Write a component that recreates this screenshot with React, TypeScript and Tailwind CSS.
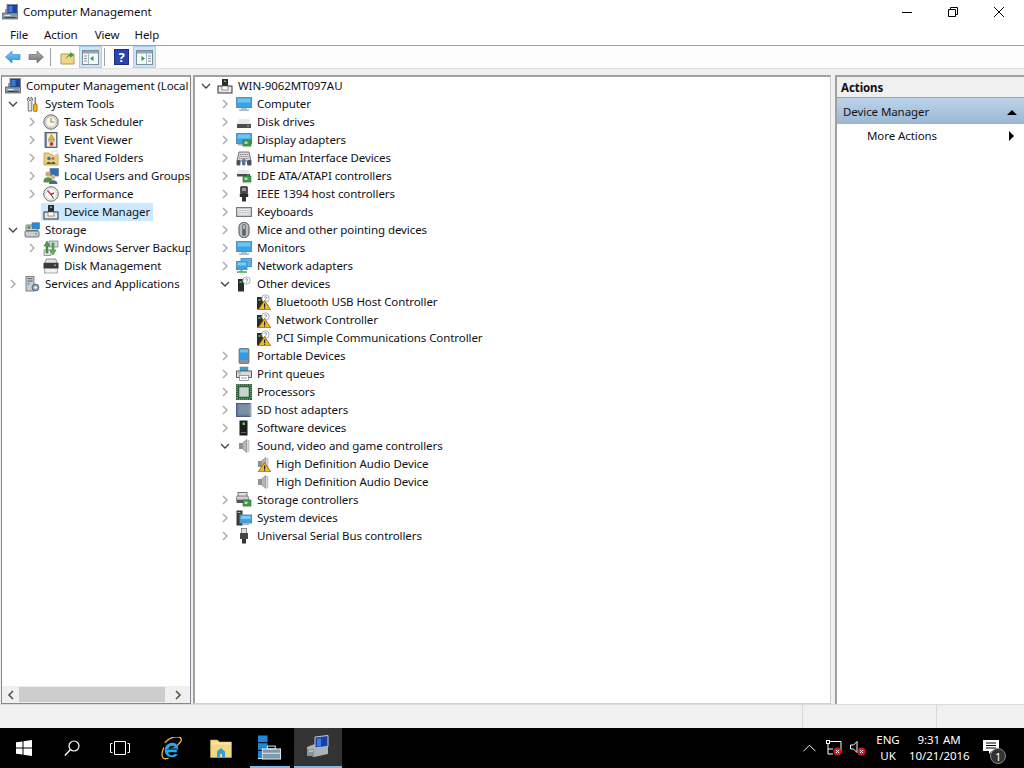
import type { ReactNode } from "react";

const chip = (
  <>
    <rect x="7" y="8" width="8" height="6" fill="#3f9a57" stroke="#1f6b37" strokeWidth="0.6" />
    <rect x="8.5" y="9.5" width="3" height="2.5" fill="#b7d9a8" />
    <path d="M8 14.5v1M10 14.5v1M12 14.5v1M14 14.5v1" stroke="#c9a227" strokeWidth="0.8" />
  </>
);

const warn = (
  <>
    <path d="M9.5 6.5 15.8 15.8H3.2Z" fill="#f5b81c" stroke="#8a6200" strokeWidth="0.8" />
    <rect x="9" y="9.5" width="1.2" height="3.5" fill="#222" />
    <rect x="9" y="13.6" width="1.2" height="1.2" fill="#222" />
  </>
);

const soundShape = (
  <>
    <rect x="3" y="5" width="3.5" height="6" fill="#8f8f8f" />
    <path d="M6.5 5 11 1.5v13L6.5 11Z" fill="#b4b4b4" stroke="#7a7a7a" strokeWidth="0.6" />
    <rect x="12" y="2" width="1.3" height="12" fill="#c4c4c4" />
  </>
);

const otherShape = (
  <>
    <rect x="2" y="3" width="6" height="12.5" fill="#2c2c2c" />
    <rect x="3.5" y="5" width="2" height="2" fill="#4caf50" />
    <circle cx="10.5" cy="4.5" r="3.7" fill="#fff" stroke="#9a9a9a" strokeWidth="0.8" />
    <path d="M9.3 3.6c.3-1.2 2.4-1.2 2.4.2 0 .9-1.2.9-1.2 1.8M10.5 6.2v.6" fill="none" stroke="#4a78b5" strokeWidth="0.8" />
  </>
);

const devMgrShape = (
  <>
    <rect x="5" y="1" width="6" height="7" fill="#2f2f2f" />
    <rect x="7" y="2.5" width="2" height="1.5" fill="#6fbf73" />
    <rect x="1" y="8" width="14" height="7" fill="#e8e8e8" stroke="#333" />
    <rect x="5" y="8" width="6" height="4" fill="#fff" stroke="#555" strokeWidth="0.6" />
  </>
);

const monitorShape = (
  <>
    <rect x="0.5" y="1.5" width="15" height="10" fill="#3aa3e3" stroke="#5d8fb0" />
    <rect x="1.5" y="2.5" width="13" height="4" fill="#6cc4f2" />
    <rect x="5" y="12" width="6" height="1.5" fill="#a9c3d3" />
    <rect x="3" y="13.5" width="10" height="1.2" fill="#8aa3b3" />
  </>
);

const icons: Record<string, ReactNode> = {
  computerMgmt: (
    <>
      <rect x="3" y="5" width="10" height="7" fill="#8f9aa5" />
      <rect x="5" y="0.5" width="10.5" height="9" fill="#1d3fa5" stroke="#7d8b99" />
      <rect x="6.5" y="2" width="4" height="6" fill="#3b7be0" />
      <rect x="0.5" y="9" width="15" height="6" fill="#8d98a3" stroke="#4e5862" strokeWidth="0.7" />
      <rect x="2.5" y="11" width="6" height="1" fill="#e6e6e6" />
      <rect x="2.5" y="13" width="11" height="1" fill="#3c444c" />
      <rect x="11" y="10.5" width="2" height="1.5" fill="#57b957" />
    </>
  ),
  tools: (
    <>
      <path d="M5 1v3l1 1 1-1V1c2 .8 2.2 3.4.8 4.6V15H4.2V5.6C2.8 4.4 3 1.8 5 1Z" fill="#e6e6e6" stroke="#555" strokeWidth="0.8" />
      <rect x="10.5" y="1" width="1.6" height="7" fill="#888" />
      <rect x="9.5" y="8" width="3.6" height="7.5" rx="1" fill="#efb315" stroke="#7d5d00" strokeWidth="0.7" />
    </>
  ),
  clock: (
    <>
      <circle cx="8" cy="8" r="7.2" fill="#d8d8d0" stroke="#6d6d6d" />
      <circle cx="8" cy="8" r="5.3" fill="#f7f7ef" stroke="#b0b0a8" strokeWidth="0.6" />
      <path d="M8 4v4h3.5" fill="none" stroke="#a88a2c" strokeWidth="1.1" />
    </>
  ),
  eventViewer: (
    <>
      <rect x="2" y="0.5" width="12" height="15" fill="#7d8fa8" stroke="#3e4a5c" strokeWidth="0.8" />
      <rect x="4" y="1.5" width="9" height="13" fill="#f2f0d8" />
      <path d="M8.5 2.5 11.5 7.5H5.5Z" fill="#f2b91f" stroke="#8a6a00" strokeWidth="0.5" />
      <path d="M5 9h7" stroke="#8a8a8a" />
      <circle cx="8.5" cy="12" r="2" fill="#d9352c" />
    </>
  ),
  sharedFolder: (
    <>
      <path d="M1 3h5l1 1.5h8V15H1Z" fill="#eccf86" stroke="#b69a50" strokeWidth="0.8" />
      <rect x="9" y="1" width="5" height="4" fill="#fff" stroke="#bbb" strokeWidth="0.5" />
      <circle cx="6" cy="8.5" r="1.8" fill="#3e6fae" />
      <circle cx="10" cy="8.5" r="1.8" fill="#c9823a" />
      <path d="M3.5 14c0-3 4.5-3 4.5 0ZM8 14c0-3 4.5-3 4.5 0Z" fill="#4b6a2f" />
    </>
  ),
  users: (
    <>
      <rect x="7" y="0.5" width="8.5" height="7.5" fill="#2e6db8" stroke="#6d7f92" strokeWidth="0.8" />
      <circle cx="5" cy="6" r="2.6" fill="#d6a679" />
      <path d="M0.5 13c0-5 9-5 9 0v1.5h-9Z" fill="#5a8f3c" />
      <circle cx="10" cy="9" r="2.4" fill="#dbb18a" />
      <path d="M6 16c0-5 8.5-5 8.5 0Z" fill="#3d6ca8" />
    </>
  ),
  performance: (
    <>
      <circle cx="8" cy="8" r="7.3" fill="#efefef" stroke="#6e6e6e" />
      <circle cx="8" cy="8" r="5.2" fill="#fff" stroke="#c5c5c5" strokeWidth="0.6" />
      <path d="M4.5 4.5 8 8.5l3-1.5" fill="none" stroke="#d3281f" strokeWidth="1.4" />
      <path d="M8 8.5 10.5 12.5" stroke="#333" strokeWidth="1" />
    </>
  ),
  devMgr: devMgrShape,
  storage: (
    <>
      <rect x="1" y="9" width="14" height="6" rx="1" fill="#c9cdd0" stroke="#505558" strokeWidth="0.8" />
      <rect x="11" y="11" width="2" height="1.5" fill="#5abf5a" />
      <rect x="2" y="3" width="12" height="5.5" rx="1" fill="#d6dadd" stroke="#505558" strokeWidth="0.8" />
      <circle cx="5" cy="5.5" r="1.8" fill="#5c9a5c" />
      <rect x="8" y="0.8" width="7.5" height="6" fill="#1f8fd6" stroke="#56708a" strokeWidth="0.6" />
    </>
  ),
  backup: (
    <>
      <rect x="6" y="1" width="9" height="6" fill="#cfd6dc" stroke="#596470" strokeWidth="0.6" />
      <rect x="1" y="10" width="7" height="5.5" fill="#dfe3e6" stroke="#596470" strokeWidth="0.6" />
      <path d="M4 1 1 6h2v7h2V6h2Z" fill="#47a047" stroke="#2b6b2b" strokeWidth="0.5" />
      <path d="M10 15l3-5h-2V3H9v7H7Z" fill="#62b84f" stroke="#2b6b2b" strokeWidth="0.5" />
    </>
  ),
  disk: (
    <>
      <path d="M3.5 1h9l2 4h-13Z" fill="#e3e3e3" stroke="#666" strokeWidth="0.7" />
      <rect x="0.5" y="5" width="15" height="5.5" fill="#3a3a3a" />
      <rect x="11" y="6.5" width="2" height="1.5" fill="#66cc66" />
      <rect x="1.5" y="10.5" width="13" height="4.5" fill="#f2f2f2" stroke="#777" strokeWidth="0.6" />
    </>
  ),
  services: (
    <>
      <rect x="2" y="0.5" width="8" height="14.5" fill="#c5ccd3" stroke="#5f6b76" strokeWidth="0.8" />
      <rect x="3.5" y="2" width="5" height="1.2" fill="#5f6b76" />
      <rect x="3.5" y="4.5" width="5" height="1.2" fill="#5f6b76" />
      <rect x="3.5" y="7" width="2" height="1.5" fill="#4b9fd5" />
      <circle cx="11.5" cy="11.5" r="3.4" fill="#8da3b8" stroke="#465868" strokeWidth="0.8" />
      <circle cx="11.5" cy="11.5" r="1.2" fill="#fff" />
    </>
  ),
  computer: monitorShape,
  diskDrive: (
    <>
      <path d="M3 5h10l2 5H1Z" fill="#e9e9e9" />
      <rect x="1" y="10" width="14" height="4" rx="0.5" fill="#4d4d4d" />
      <rect x="11" y="11.5" width="2" height="1" fill="#5fd35f" />
    </>
  ),
  displayAdapter: (
    <>
      <rect x="0.5" y="1.5" width="15" height="10" fill="#3aa3e3" stroke="#5d8fb0" />
      <rect x="1.5" y="2.5" width="13" height="4" fill="#6cc4f2" />
      <rect x="2" y="12" width="5" height="1.5" fill="#9fb4c2" />
      {chip}
    </>
  ),
  hid: (
    <>
      <path d="M3 2h10l2 9H1Z" fill="#d9d9d9" stroke="#555" strokeWidth="0.8" />
      <path d="M4 4.5h8M3.5 6.5h9M3 8.5h10" stroke="#7c7c7c" strokeDasharray="1 0.7" />
      <rect x="0.5" y="10" width="4" height="5.5" rx="1.5" fill="#4d5157" />
      <rect x="6" y="9" width="3.5" height="6.5" rx="1.5" fill="#5377a5" />
      <rect x="11" y="10" width="4.5" height="5.5" rx="1.5" fill="#4d5157" />
    </>
  ),
  ide: (
    <>
      <path d="M3 2h9l2 4H1Z" fill="#e9e9e9" />
      <rect x="1" y="6" width="13" height="2.5" fill="#4d4d4d" />
      <rect x="11" y="6.7" width="2" height="1" fill="#5fd35f" />
      {chip}
    </>
  ),
  ieee: (
    <>
      <rect x="4.5" y="0.5" width="7" height="7.5" rx="1" fill="#4a4a4a" stroke="#222" strokeWidth="0.6" />
      <rect x="6" y="2" width="4" height="3" fill="#9a9a9a" />
      <rect x="3.8" y="8" width="8.4" height="3" fill="#2d2d2d" />
      <rect x="6" y="11" width="4" height="4.5" fill="#333" />
    </>
  ),
  keyboard: (
    <>
      <rect x="0.5" y="3.5" width="15" height="9" fill="#c7cbd0" stroke="#757a80" />
      <path d="M2 5.5h12M2 7.5h12" stroke="#fff" strokeDasharray="1 0.6" />
      <path d="M3 10h10" stroke="#f7f7f7" strokeWidth="1.2" />
    </>
  ),
  mouse: (
    <>
      <rect x="3" y="0.5" width="10" height="15" rx="4.5" fill="#b9bec4" stroke="#4d5258" />
      <rect x="6.2" y="2" width="3.6" height="12" rx="1.8" fill="#5d646c" />
      <rect x="7.3" y="3" width="1.4" height="4" fill="#d5d9dd" />
    </>
  ),
  monitor: monitorShape,
  network: (
    <>
      <rect x="5" y="0.5" width="10.5" height="8" fill="#57b1e8" stroke="#5d8fb0" />
      <rect x="0.5" y="3.5" width="10.5" height="8" fill="#3aa3e3" stroke="#5d8fb0" />
      <rect x="1.5" y="4.5" width="8.5" height="3" fill="#79cdf5" />
      <path d="M5.5 11.5v2M1 14h10" stroke="#4aa84a" strokeWidth="1.6" />
    </>
  ),
  other: otherShape,
  warnDevice: (
    <>
      {otherShape}
      {warn}
    </>
  ),
  portable: (
    <>
      <rect x="3" y="0.5" width="10" height="15" rx="1" fill="#8a9096" stroke="#5c6268" strokeWidth="0.7" />
      <rect x="4" y="1.5" width="8" height="10.5" fill="#2f9de6" />
      <rect x="4" y="1.5" width="8" height="3" fill="#66c0f2" />
    </>
  ),
  printer: (
    <>
      <rect x="4" y="1" width="8" height="5" fill="#3f9ad9" stroke="#777" strokeWidth="0.5" />
      <rect x="0.5" y="5" width="15" height="6.5" fill="#d9d9d9" stroke="#4f4f4f" strokeWidth="0.9" />
      <rect x="2" y="6.5" width="3" height="1" fill="#55b655" />
      <rect x="3.5" y="9.5" width="9" height="5" fill="#fff" stroke="#777" strokeWidth="0.7" />
      <path d="M5 12h6" stroke="#999" />
    </>
  ),
  cpu: (
    <>
      <rect x="0.5" y="0.5" width="15" height="15" fill="#1f6b3b" stroke="#3a5a3a" />
      <path d="M1 1h14M1 15h14M1 1v14M15 1v14" stroke="#c9b458" strokeDasharray="1 1" />
      <rect x="3" y="3" width="10" height="10" fill="#c8d4cd" stroke="#4a5a50" strokeWidth="0.6" />
    </>
  ),
  sd: (
    <>
      <rect x="0.5" y="1.5" width="14" height="13" fill="#5b7da8" stroke="#475f80" />
      <rect x="2.5" y="2.5" width="11" height="10" fill="#7f8ea3" />
      <rect x="13.5" y="1.5" width="2" height="13" fill="#98a9bd" />
    </>
  ),
  software: (
    <>
      <rect x="3.5" y="0.5" width="8" height="15" fill="#1e1e1e" />
      <rect x="6.5" y="2.5" width="2.5" height="2.5" fill="#55d16a" />
      <rect x="5" y="12" width="5" height="1" fill="#666" />
    </>
  ),
  sound: soundShape,
  soundWarn: (
    <>
      {soundShape}
      {warn}
    </>
  ),
  storageCtl: (
    <>
      <rect x="2" y="0.5" width="9" height="4" fill="#e0e0e0" stroke="#4a4a4a" strokeWidth="0.7" />
      <path d="M1 4h11l1 4H0Z" fill="#d0d0d0" stroke="#4a4a4a" strokeWidth="0.6" />
      <rect x="0.5" y="8" width="8" height="3" fill="#555" />
      {chip}
    </>
  ),
  system: (
    <>
      <rect x="0.5" y="0.5" width="6" height="15" fill="#3a3a3a" />
      <rect x="1.5" y="2" width="3" height="1" fill="#8cd08c" />
      <rect x="4" y="5" width="11.5" height="8" fill="#3aa3e3" stroke="#5d8fb0" />
      <rect x="5" y="6" width="9.5" height="3" fill="#79cdf5" />
      <rect x="7" y="13.5" width="6" height="1.5" fill="#9fb4c2" />
    </>
  ),
  usb: (
    <>
      <rect x="5.5" y="0.5" width="5" height="5" fill="#e3e3e3" stroke="#666" strokeWidth="0.7" />
      <rect x="4" y="5" width="8" height="6" rx="0.5" fill="#444" />
      <rect x="6" y="11" width="4" height="4.5" fill="#333" />
    </>
  ),
};

function Icon({ name }: { name: string }) {
  return (
    <svg viewBox="0 0 16 16" className="w-4 h-4 shrink-0">
      {icons[name]}
    </svg>
  );
}

function Chevron({ state }: { state: "open" | "closed" | "none" }) {
  if (state === "none") return <span className="w-[19px] shrink-0" />;
  return (
    <span className="w-[19px] shrink-0 flex pl-[3px]">
      <svg viewBox="0 0 10 10" className="w-[10px] h-[10px]">
        {state === "open" ? (
          <path d="M1 3l4 4 4-4" fill="none" stroke="#404040" strokeWidth="1.3" />
        ) : (
          <path d="M3 1l4 4-4 4" fill="none" stroke="#a6a6a6" strokeWidth="1.3" />
        )}
      </svg>
    </span>
  );
}

type Row = { level: number; state: "open" | "closed" | "none"; icon: string; label: string; selected?: boolean };

function TreeRow({ level, state, icon, label, selected }: Row) {
  return (
    <div className="h-[18px] flex items-center whitespace-nowrap" style={{ paddingLeft: level * 19 + 3 }}>
      <Chevron state={state} />
      <div
        className={
          selected
            ? "flex items-center h-[18px] bg-[#cce8ff] -ml-[2px] pl-[2px] pr-[3px]"
            : "flex items-center h-[18px] pr-[3px]"
        }
      >
        <Icon name={icon} />
        <span className="ml-[5px]">{label}</span>
      </div>
    </div>
  );
}

const leftRows: Row[] = [
  { level: 0, state: "open", icon: "tools", label: "System Tools" },
  { level: 1, state: "closed", icon: "clock", label: "Task Scheduler" },
  { level: 1, state: "closed", icon: "eventViewer", label: "Event Viewer" },
  { level: 1, state: "closed", icon: "sharedFolder", label: "Shared Folders" },
  { level: 1, state: "closed", icon: "users", label: "Local Users and Groups" },
  { level: 1, state: "closed", icon: "performance", label: "Performance" },
  { level: 1, state: "none", icon: "devMgr", label: "Device Manager", selected: true },
  { level: 0, state: "open", icon: "storage", label: "Storage" },
  { level: 1, state: "closed", icon: "backup", label: "Windows Server Backup" },
  { level: 1, state: "none", icon: "disk", label: "Disk Management" },
  { level: 0, state: "closed", icon: "services", label: "Services and Applications" },
];

const deviceRows: Row[] = [
  { level: 0, state: "open", icon: "devMgr", label: "WIN-9062MT097AU" },
  { level: 1, state: "closed", icon: "computer", label: "Computer" },
  { level: 1, state: "closed", icon: "diskDrive", label: "Disk drives" },
  { level: 1, state: "closed", icon: "displayAdapter", label: "Display adapters" },
  { level: 1, state: "closed", icon: "hid", label: "Human Interface Devices" },
  { level: 1, state: "closed", icon: "ide", label: "IDE ATA/ATAPI controllers" },
  { level: 1, state: "closed", icon: "ieee", label: "IEEE 1394 host controllers" },
  { level: 1, state: "closed", icon: "keyboard", label: "Keyboards" },
  { level: 1, state: "closed", icon: "mouse", label: "Mice and other pointing devices" },
  { level: 1, state: "closed", icon: "monitor", label: "Monitors" },
  { level: 1, state: "closed", icon: "network", label: "Network adapters" },
  { level: 1, state: "open", icon: "other", label: "Other devices" },
  { level: 2, state: "none", icon: "warnDevice", label: "Bluetooth USB Host Controller" },
  { level: 2, state: "none", icon: "warnDevice", label: "Network Controller" },
  { level: 2, state: "none", icon: "warnDevice", label: "PCI Simple Communications Controller" },
  { level: 1, state: "closed", icon: "portable", label: "Portable Devices" },
  { level: 1, state: "closed", icon: "printer", label: "Print queues" },
  { level: 1, state: "closed", icon: "cpu", label: "Processors" },
  { level: 1, state: "closed", icon: "sd", label: "SD host adapters" },
  { level: 1, state: "closed", icon: "software", label: "Software devices" },
  { level: 1, state: "open", icon: "sound", label: "Sound, video and game controllers" },
  { level: 2, state: "none", icon: "soundWarn", label: "High Definition Audio Device" },
  { level: 2, state: "none", icon: "sound", label: "High Definition Audio Device" },
  { level: 1, state: "closed", icon: "storageCtl", label: "Storage controllers" },
  { level: 1, state: "closed", icon: "system", label: "System devices" },
  { level: 1, state: "closed", icon: "usb", label: "Universal Serial Bus controllers" },
];

function ToolbarPane({ side }: { side: "left" | "right" }) {
  return (
    <div className="w-[23px] h-[22px] bg-[#cce4f7] border border-[#a5d0f0] flex items-center justify-center">
      <svg viewBox="0 0 17 15" className="w-[17px] h-[15px]">
        <rect x="0.5" y="0.5" width="16" height="14" fill="#f6f8f9" stroke="#7d8c99" />
        <rect x="1" y="1" width="15" height="2.5" fill="#94a3b0" />
        {side === "left" ? (
          <>
            <path d="M2 6h3M2 8.5h3M2 11h3" stroke="#7d8c99" />
            <path d="M6.5 3.5v11" stroke="#a9b5bf" />
            <path d="M11.5 6v5L8 8.5Z" fill="#23a047" />
          </>
        ) : (
          <>
            <path d="M12 6h3M12 8.5h3M12 11h3" stroke="#7d8c99" />
            <path d="M10.5 3.5v11" stroke="#a9b5bf" />
            <path d="M5.5 6v5L9 8.5Z" fill="#23a047" />
          </>
        )}
      </svg>
    </div>
  );
}

export default function App() {
  return (
    <div className="w-[1024px] h-[768px] overflow-hidden flex flex-col bg-white text-[11.5px] leading-[18px] tracking-[-0.08px] text-[#101018] font-['Noto_Sans',sans-serif]">
      {/* title bar */}
      <div className="h-[24px] flex items-center shrink-0">
        <div className="pl-[2px]">
          <Icon name="computerMgmt" />
        </div>
        <span className="ml-[5px]">Computer Management</span>
        <div className="ml-auto flex items-center">
          <div className="w-[46px] flex justify-center">
            <div className="w-[10px] h-px bg-black" />
          </div>
          <div className="w-[46px] flex justify-center">
            <svg viewBox="0 0 10 10" className="w-[10px] h-[10px]">
              <path d="M0.5 2.5h7v7h-7ZM2.5 2.5v-2h7v7h-2" fill="none" stroke="#000" />
            </svg>
          </div>
          <div className="w-[46px] mr-[2px] flex justify-center">
            <svg viewBox="0 0 10 10" className="w-[10px] h-[10px]">
              <path d="M0 0l10 10M10 0L0 10" fill="none" stroke="#000" />
            </svg>
          </div>
        </div>
      </div>

      {/* menu */}
      <div className="h-[22px] flex items-center shrink-0 border-b border-[#a0a0a0]">
        <span className="ml-[10px]">File</span>
        <span className="ml-[16px]">Action</span>
        <span className="ml-[17px]">View</span>
        <span className="ml-[15px]">Help</span>
      </div>

      {/* toolbar */}
      <div className="h-[22px] flex items-center shrink-0 bg-[#fdfdfd]">
        <svg viewBox="0 0 16 14" className="ml-[5px] w-4 h-[14px]">
          <defs>
            <linearGradient id="backFill" x1="0" y1="0" x2="0" y2="1">
              <stop offset="0" stopColor="#8fd0f7" />
              <stop offset="1" stopColor="#1f8fe0" />
            </linearGradient>
            <linearGradient id="fwdFill" x1="0" y1="0" x2="0" y2="1">
              <stop offset="0" stopColor="#b5b5b5" />
              <stop offset="1" stopColor="#6e6e6e" />
            </linearGradient>
          </defs>
          <path d="M7 1v3.5h8v5H7V13L0.5 7Z" fill="url(#backFill)" stroke="#2a7fc0" strokeWidth="0.6" />
        </svg>
        <svg viewBox="0 0 16 14" className="ml-[7px] w-4 h-[14px]">
          <path d="M9 1v3.5H1v5h8V13l6.5-6Z" fill="url(#fwdFill)" stroke="#5f5f5f" strokeWidth="0.6" />
        </svg>
        <div className="ml-[6px] w-px h-[18px] bg-[#a0a0a0]" />
        <svg viewBox="0 0 16 16" className="ml-[9px] w-4 h-4">
          <path d="M1 5h13v10H1Z" fill="#f0d78c" stroke="#b09a50" />
          <path d="M5 11c1-3 3-5 5-6V3l4 3-4 3V7c-2 .5-4 2-5 4Z" fill="#3da33d" />
        </svg>
        <div className="ml-[3px]">
          <ToolbarPane side="left" />
        </div>
        <div className="ml-[2px] w-px h-[18px] bg-[#a0a0a0]" />
        <div className="ml-[9px] w-[15px] h-4 bg-[#2b45b0] flex items-center justify-center border border-[#1c2f80]">
          <span className="text-white text-[13px] font-bold leading-none">?</span>
        </div>
        <div className="ml-[4px]">
          <ToolbarPane side="right" />
        </div>
      </div>

      {/* panels */}
      <div className="h-[636px] shrink-0 flex bg-[#f0f0f0] pt-[6px] border-t border-[#e3e3e3]">
        <div className="w-[190px] ml-px flex flex-col bg-white border border-[#828790] border-t-2 border-t-[#a0a0a0] overflow-hidden">
          <div className="flex-1 overflow-hidden">
            <div className="h-[18px] flex items-center whitespace-nowrap pl-[3px]">
              <Icon name="computerMgmt" />
              <span className="ml-[5px]">Computer Management (Local</span>
            </div>
            {leftRows.map((r, i) => (
              <TreeRow key={i} {...r} />
            ))}
          </div>
          <div className="h-[17px] flex items-center bg-[#f0f0f0] shrink-0">
            <div className="w-[17px] flex justify-center">
              <svg viewBox="0 0 8 10" className="w-2 h-[10px]">
                <path d="M6 1L2 5l4 4" fill="none" stroke="#505050" strokeWidth="1.6" />
              </svg>
            </div>
            <div className="w-[146px] h-[15px] bg-[#cdcdcd]" />
            <div className="flex-1 flex justify-center">
              <svg viewBox="0 0 8 10" className="w-2 h-[10px]">
                <path d="M2 1l4 4-4 4" fill="none" stroke="#505050" strokeWidth="1.6" />
              </svg>
            </div>
          </div>
        </div>

        <div className="w-[638px] ml-[2px] bg-white border-l-2 border-t-2 border-[#a0a0a0] border-r border-r-[#d0d0d0] border-b border-b-[#d0d0d0] overflow-hidden">
          {deviceRows.map((r, i) => (
            <TreeRow key={i} {...r} />
          ))}
        </div>

        <div className="flex-1 ml-[4px] bg-white border-l-2 border-t-2 border-[#a0a0a0]">
          <div className="h-[21px] flex items-center bg-[#f0f0f0] border-b border-[#a0a0a0] pl-[4px] pt-px font-bold">Actions</div>
          <div className="h-[26px] flex items-center pl-[6px] pt-px bg-gradient-to-b from-[#bcd4ea] to-[#9ab6d2]">
            <span>Device Manager</span>
            <svg viewBox="0 0 10 6" className="ml-auto mr-[7px] w-[10px] h-[6px]">
              <path d="M0 6l5-5 5 5Z" fill="#000" />
            </svg>
          </div>
          <div className="h-[24px] flex items-center pl-[30px]">
            <span>More Actions</span>
            <svg viewBox="0 0 6 10" className="ml-auto mr-[9px] w-[6px] h-[10px]">
              <path d="M0 0l5 5-5 5Z" fill="#000" />
            </svg>
          </div>
        </div>
      </div>

      {/* status bar */}
      <div className="h-[24px] shrink-0 flex bg-[#f0f0f0] border-t border-[#dcdcdc]">
        <div className="w-[803px] border-r border-[#d9d9d9]" />
        <div className="w-[134px] border-r border-[#d9d9d9]" />
      </div>

      {/* taskbar */}
      <div className="h-[40px] shrink-0 flex items-stretch bg-black text-white">
        <div className="w-[48px] flex items-center justify-center">
          <svg viewBox="0 0 16 16" className="w-4 h-4">
            <path d="M0 2.3 6.5 1.4V7.5H0ZM7.5 1.3 16 0V7.5H7.5ZM0 8.5H6.5V14.6L0 13.7ZM7.5 8.5H16V16L7.5 14.7Z" fill="#fff" />
          </svg>
        </div>
        <div className="w-[48px] flex items-center justify-center">
          <svg viewBox="0 0 16 16" className="w-4 h-4">
            <circle cx="10" cy="6" r="5" fill="none" stroke="#fff" strokeWidth="1.2" />
            <path d="M6.3 9.7 0.8 15.5" stroke="#fff" strokeWidth="1.4" />
          </svg>
        </div>
        <div className="w-[48px] flex items-center justify-center">
          <svg viewBox="0 0 20 14" className="w-5 h-[14px]">
            <path d="M4.5 0.5h11v13h-11ZM2.5 2.5H0.5v9h2M17.5 2.5h2v9h-2" fill="none" stroke="#fff" />
          </svg>
        </div>
        <div className="w-[49px] ml-[3px] flex items-center justify-center">
          <svg viewBox="0 0 24 24" className="w-[23px] h-[23px]">
            <path d="M5 6C12-2 24-2 22 4c-1 3-4 4-6 7" fill="none" stroke="#e8b32a" strokeWidth="1.4" />
            <path d="M4 11C1 18 1 25 9 22" fill="none" stroke="#e8b32a" strokeWidth="1.4" />
            <path d="M6 13h13c0-5-3-7-6.5-7S5 9 5 13.5 8 21 12.5 21c3 0 5-1 6-3h-4c-.6.6-1.2 1-2.3 1-2 0-3.4-1-3.7-3h9v-4H9c.3-1.5 1.6-2.5 3.2-2.5S15 9 15.2 10.5" fill="#27a8e8" fillRule="evenodd" />
          </svg>
        </div>
        <div className="w-[49px] flex items-center justify-center">
          <svg viewBox="0 0 22 19" className="w-[22px] h-[19px]">
            <path d="M0.5 1h7l2 2h12v15.5H0.5Z" fill="#f4d782" stroke="#caa94e" strokeWidth="0.6" />
            <rect x="1" y="3.5" width="20" height="2" fill="#f9e7ae" />
            <path d="M7 18.5v-6l4-3.5 4 3.5v6h-3v-3.5h-2v3.5Z" fill="#2aa0dc" />
          </svg>
        </div>
        <div className="w-[49px] flex items-center justify-center">
          <div className="w-[40px] h-full border-b-2 border-[#76b9ed] flex items-center justify-center">
            <svg viewBox="0 0 26 26" className="w-[25px] h-[25px]">
              <rect x="1" y="0.5" width="10" height="7" fill="#1e88d8" />
              <rect x="1" y="8.5" width="10" height="7" fill="#1e88d8" />
              <rect x="1" y="16.5" width="4" height="8" fill="#1e88d8" />
              <path d="M1 24.5h4" stroke="#fff" />
              <rect x="5.5" y="14.5" width="19" height="10.5" fill="#7b98ad" stroke="#e8eef2" />
              <rect x="11" y="11.5" width="8" height="3" fill="none" stroke="#e8eef2" />
              <rect x="5.5" y="18.5" width="19" height="1" fill="#e8eef2" />
            </svg>
          </div>
        </div>
        <div className="w-[48px] bg-[#333333] border-b-2 border-[#76b9ed] flex items-center justify-center">
          <svg viewBox="0 0 24 24" className="w-6 h-6">
            <path d="M9 2 22 0.5v11L9 13Z" fill="#1a3ea8" stroke="#c5ccd2" />
            <path d="M11 3.5h4v8h-4Z" fill="#3a7fe0" />
            <path d="M1 12 9 9v4l13-1.5V19L8 22 1 19Z" fill="#aab2b9" />
            <path d="M1 14h7v7H1Z" fill="#8b939a" />
            <rect x="3" y="15.5" width="4" height="1" fill="#e8e8e8" />
          </svg>
        </div>

        <div className="ml-auto flex items-center">
          <svg viewBox="0 0 14 8" className="w-[13px] h-2 mr-[10px]">
            <path d="M0.5 7.5 7 1l6.5 6.5" fill="none" stroke="#fff" />
          </svg>
          <svg viewBox="0 0 16 16" className="w-4 h-4 mr-[8px]">
            <path d="M4 1.5h11v9.5" fill="none" stroke="#fff" />
            <rect x="0.5" y="0.5" width="3" height="3" fill="none" stroke="#fff" />
            <path d="M2 3.5v10.5h5M2 9h5" fill="none" stroke="#fff" />
            <circle cx="11.5" cy="11.5" r="4" fill="#e81123" />
            <path d="M10 10l3 3M13 10l-3 3" stroke="#fff" />
          </svg>
          <svg viewBox="0 0 16 16" className="w-4 h-4 mr-[10px]">
            <path d="M0.5 5h3L7 1.5v11L3.5 9h-3Z" fill="none" stroke="#fff" />
            <circle cx="11.5" cy="11.5" r="4" fill="#e81123" />
            <path d="M10 10l3 3M13 10l-3 3" stroke="#fff" />
          </svg>
          <div className="w-[24px] text-center leading-[16px] mr-[9px]">
            <div>ENG</div>
            <div>UK</div>
          </div>
          <div className="w-[60px] text-center leading-[16px] mr-[14px]">
            <div>9:31 AM</div>
            <div>10/21/2016</div>
          </div>
          <div className="w-[26px] mr-[15px] relative h-[24px]">
            <svg viewBox="0 0 16 16" className="w-4 h-4 mt-[4px]">
              <path d="M0 0h16v11H9l-3 3v-3H0Z" fill="#fff" />
              <path d="M3 3h10M3 5.5h10M3 8h10" stroke="#000" />
            </svg>
            <div className="absolute left-[7px] top-[12px] w-[16px] h-[16px] rounded-full bg-[#333] border border-[#888] flex items-center justify-center text-[11px] leading-none">
              1
            </div>
          </div>
        </div>
      </div>
    </div>
  );
}
